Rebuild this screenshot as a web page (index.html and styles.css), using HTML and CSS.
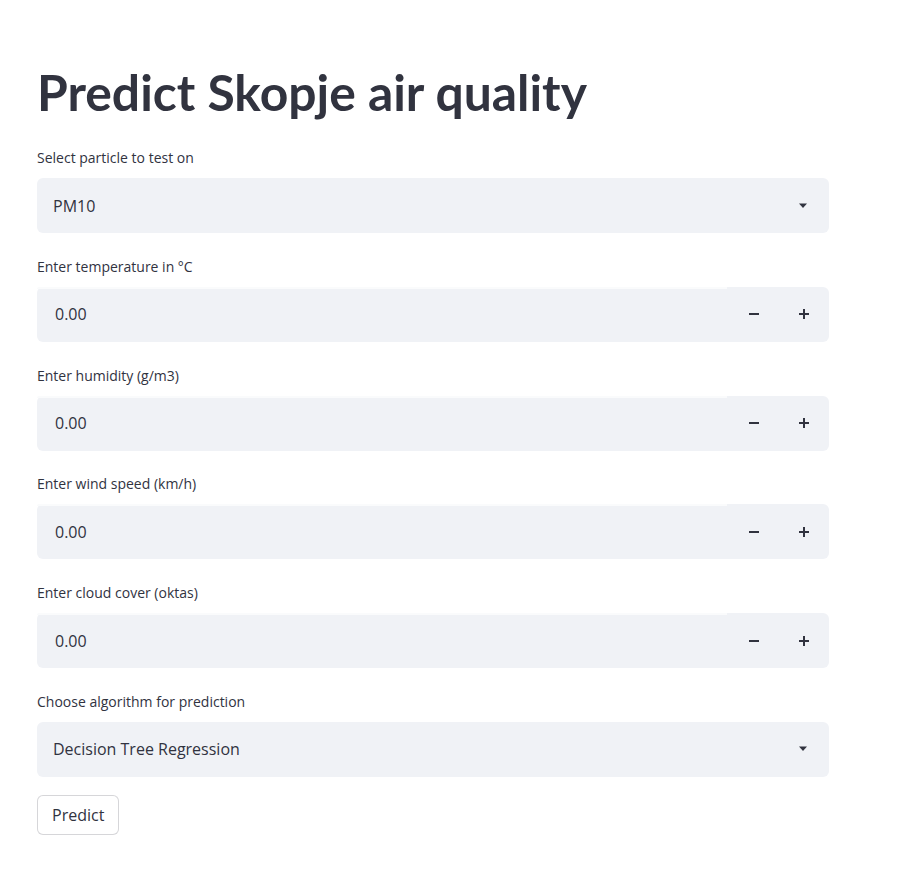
FILE: index.html
```html
<!DOCTYPE html>
<html>
<head>
<meta charset="utf-8">
<link rel="stylesheet" href="styles.css">
</head>
<body>
<main class="app">
  <h1 class="title">Predict Skopje air quality</h1>

  <div class="field">
    <label class="label">Select particle to test on</label>
    <div class="select">
      <span class="value">PM10</span>
      <svg class="caret" width="10" height="6" viewBox="0 0 10 6"><path d="M1 0.5h8L5 5z" fill="#31333f"/></svg>
    </div>
  </div>

  <div class="field">
    <label class="label">Enter temperature in °C</label>
    <div class="number">
      <span class="num-value">0.00</span>
      <span class="step">
        <svg width="12" height="12" viewBox="0 0 12 12"><rect x="1" y="5" width="10" height="2" fill="#31333f"/></svg>
      </span>
      <span class="step">
        <svg width="12" height="12" viewBox="0 0 12 12"><rect x="1" y="5" width="10" height="2" fill="#31333f"/><rect x="5" y="1" width="2" height="10" fill="#31333f"/></svg>
      </span>
    </div>
  </div>

  <div class="field">
    <label class="label">Enter humidity (g/m3)</label>
    <div class="number">
      <span class="num-value">0.00</span>
      <span class="step">
        <svg width="12" height="12" viewBox="0 0 12 12"><rect x="1" y="5" width="10" height="2" fill="#31333f"/></svg>
      </span>
      <span class="step">
        <svg width="12" height="12" viewBox="0 0 12 12"><rect x="1" y="5" width="10" height="2" fill="#31333f"/><rect x="5" y="1" width="2" height="10" fill="#31333f"/></svg>
      </span>
    </div>
  </div>

  <div class="field">
    <label class="label">Enter wind speed (km/h)</label>
    <div class="number">
      <span class="num-value">0.00</span>
      <span class="step">
        <svg width="12" height="12" viewBox="0 0 12 12"><rect x="1" y="5" width="10" height="2" fill="#31333f"/></svg>
      </span>
      <span class="step">
        <svg width="12" height="12" viewBox="0 0 12 12"><rect x="1" y="5" width="10" height="2" fill="#31333f"/><rect x="5" y="1" width="2" height="10" fill="#31333f"/></svg>
      </span>
    </div>
  </div>

  <div class="field">
    <label class="label">Enter cloud cover (oktas)</label>
    <div class="number">
      <span class="num-value">0.00</span>
      <span class="step">
        <svg width="12" height="12" viewBox="0 0 12 12"><rect x="1" y="5" width="10" height="2" fill="#31333f"/></svg>
      </span>
      <span class="step">
        <svg width="12" height="12" viewBox="0 0 12 12"><rect x="1" y="5" width="10" height="2" fill="#31333f"/><rect x="5" y="1" width="2" height="10" fill="#31333f"/></svg>
      </span>
    </div>
  </div>

  <div class="field">
    <label class="label">Choose algorithm for prediction</label>
    <div class="select">
      <span class="value">Decision Tree Regression</span>
      <svg class="caret" width="10" height="6" viewBox="0 0 10 6"><path d="M1 0.5h8L5 5z" fill="#31333f"/></svg>
    </div>
  </div>

  <button class="btn">Predict</button>
</main>
</body>
</html>
```

FILE: styles.css
```css
* { box-sizing: border-box; }
html, body { margin: 0; background: #fff; }
body {
  font-family: "Open Sans", "Noto Sans", sans-serif;
  color: #31333f;
}
.app {
  width: 792px;
  margin-left: 37px;
  padding-top: 60px;
}
.title {
  font-family: "Lato", "Noto Sans", sans-serif;
  font-weight: 700;
  font-size: 49.8px;
  line-height: 64px;
  margin: 0 0 24px 0;
  letter-spacing: 0;
}
.field {
  display: flex;
  flex-direction: column;
  margin-bottom: 23.75px;
}
.label {
  font-size: 14px;
  line-height: 20px;
  height: 20px;
  margin-bottom: 10px;
  color: #31333f;
}
.select, .number {
  height: 55px;
  background: #f0f2f6;
  border-radius: 6px;
  display: flex;
  align-items: center;
  font-size: 16px;
}
.select {
  padding: 0 20px 0 16px;
  justify-content: space-between;
}
.caret { margin-right: 1px; }
.number {
  padding-left: 18px;
  position: relative;
}
.number::before {
  content: "";
  position: absolute;
  left: 0;
  top: 0;
  width: 690px;
  height: 2px;
  background: #fafbfc;
  border-top-left-radius: 6px;
}
.num-value { flex: 1; }
.step {
  width: 50px;
  height: 55px;
  display: flex;
  align-items: center;
  justify-content: center;
}
.btn {
  display: block;
  font-family: inherit;
  font-size: 16px;
  color: #31333f;
  background: #fff;
  border: 1px solid rgba(49, 51, 63, 0.2);
  border-radius: 6px;
  height: 40px;
  padding: 0 14px;
  margin-top: -5.5px;
}
```
